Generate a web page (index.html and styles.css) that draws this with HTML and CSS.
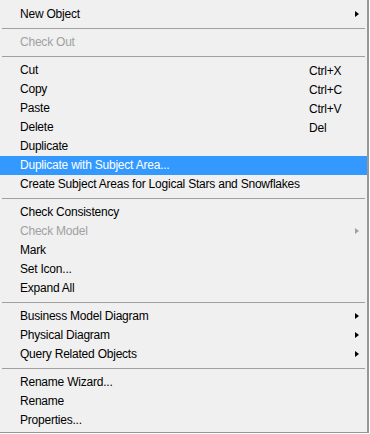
FILE: index.html
```html
<!DOCTYPE html>
<html lang="en">
<head>
    <meta charset="UTF-8">
    <title>Context Menu</title>
    <link rel="stylesheet" href="styles.css">
</head>
<body>
    <div class="menu">
        <div class="item sub"><span class="label">New Object</span></div>
        <div class="sep"></div>
        <div class="item disabled"><span class="label">Check Out</span></div>
        <div class="sep"></div>
        <div class="item"><span class="label">Cut</span><span class="key">Ctrl+X</span></div>
        <div class="item"><span class="label">Copy</span><span class="key">Ctrl+C</span></div>
        <div class="item"><span class="label">Paste</span><span class="key">Ctrl+V</span></div>
        <div class="item"><span class="label">Delete</span><span class="key">Del</span></div>
        <div class="item"><span class="label">Duplicate</span></div>
        <div class="item active"><span class="label">Duplicate with Subject Area...</span></div>
        <div class="item"><span class="label">Create Subject Areas for Logical Stars and Snowflakes</span></div>
        <div class="sep"></div>
        <div class="item"><span class="label">Check Consistency</span></div>
        <div class="item disabled sub"><span class="label">Check Model</span></div>
        <div class="item"><span class="label">Mark</span></div>
        <div class="item"><span class="label">Set Icon...</span></div>
        <div class="item"><span class="label">Expand All</span></div>
        <div class="sep"></div>
        <div class="item sub"><span class="label">Business Model Diagram</span></div>
        <div class="item sub"><span class="label">Physical Diagram</span></div>
        <div class="item sub"><span class="label">Query Related Objects</span></div>
        <div class="sep"></div>
        <div class="item"><span class="label">Rename Wizard...</span></div>
        <div class="item"><span class="label">Rename</span></div>
        <div class="item"><span class="label">Properties...</span></div>
    </div>
</body>
</html>
```

FILE: styles.css
```css
body {
    margin: 0;
    background-color: #ffffff;
    font-family: "Liberation Sans", Arial, sans-serif;
    font-size: 12px;
    letter-spacing: -0.22px;
}

.menu {
    width: 369px;
    height: 433px;
    box-sizing: border-box;
    background-color: #f0f0f0;
    border-right: 2px solid #979797;
    border-bottom: 1px solid #979797;
    padding-top: 5px;
}

.item {
    position: relative;
    display: flex;
    align-items: center;
    height: 19px;
    padding-left: 20px;
    color: #000000;
    white-space: nowrap;
}

.item .label {
    padding-bottom: 1px;
}

.item .key {
    position: absolute;
    left: 309px;
}

.item.disabled {
    color: #a0a0a0;
}

.item.active {
    background-color: #3399ff;
    color: #ffffff;
}

.item.sub::after {
    content: "";
    position: absolute;
    left: 355px;
    top: 6px;
    border-left: 4px solid #000000;
    border-top: 3.5px solid transparent;
    border-bottom: 3.5px solid transparent;
}

.item.disabled.sub::after {
    border-left-color: #a0a0a0;
}

.sep {
    height: 9px;
    display: flex;
    align-items: center;
    padding-left: 2px;
    padding-right: 2px;
}

.sep::before {
    content: "";
    flex: 1;
    height: 1px;
    background-color: #a0a0a0;
}
```
